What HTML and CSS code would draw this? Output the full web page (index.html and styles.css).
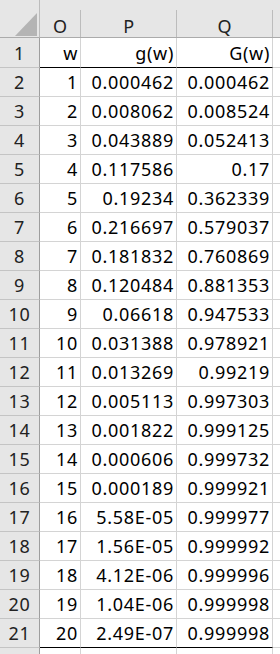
FILE: index.html
```html
<!DOCTYPE html>
<html>
<head>
<meta charset="utf-8">
<link rel="stylesheet" href="styles.css">
</head>
<body>
<div class="sheet">
  <div class="c corner"><svg class="tri" width="22" height="23" viewBox="0 0 22 23"><polygon points="0,23 22,0 22,23" fill="#b4b4b4"/></svg></div>
  <div class="c h">O</div>
  <div class="c h">P</div>
  <div class="c h">Q</div>
  <div class="c h x"></div>

  <div class="c r">1</div><div class="c tb">w</div><div class="c tb">g(w)</div><div class="c tb">G(w)</div><div class="c x"></div>
  <div class="c r">2</div><div class="c">1</div><div class="c">0.000462</div><div class="c">0.000462</div><div class="c x"></div>
  <div class="c r">3</div><div class="c">2</div><div class="c">0.008062</div><div class="c">0.008524</div><div class="c x"></div>
  <div class="c r">4</div><div class="c">3</div><div class="c">0.043889</div><div class="c">0.052413</div><div class="c x"></div>
  <div class="c r">5</div><div class="c">4</div><div class="c">0.117586</div><div class="c">0.17</div><div class="c x"></div>
  <div class="c r">6</div><div class="c">5</div><div class="c">0.19234</div><div class="c">0.362339</div><div class="c x"></div>
  <div class="c r">7</div><div class="c">6</div><div class="c">0.216697</div><div class="c">0.579037</div><div class="c x"></div>
  <div class="c r">8</div><div class="c">7</div><div class="c">0.181832</div><div class="c">0.760869</div><div class="c x"></div>
  <div class="c r">9</div><div class="c">8</div><div class="c">0.120484</div><div class="c">0.881353</div><div class="c x"></div>
  <div class="c r">10</div><div class="c">9</div><div class="c">0.06618</div><div class="c">0.947533</div><div class="c x"></div>
  <div class="c r">11</div><div class="c">10</div><div class="c">0.031388</div><div class="c">0.978921</div><div class="c x"></div>
  <div class="c r">12</div><div class="c">11</div><div class="c">0.013269</div><div class="c">0.99219</div><div class="c x"></div>
  <div class="c r">13</div><div class="c">12</div><div class="c">0.005113</div><div class="c">0.997303</div><div class="c x"></div>
  <div class="c r">14</div><div class="c">13</div><div class="c">0.001822</div><div class="c">0.999125</div><div class="c x"></div>
  <div class="c r">15</div><div class="c">14</div><div class="c">0.000606</div><div class="c">0.999732</div><div class="c x"></div>
  <div class="c r">16</div><div class="c">15</div><div class="c">0.000189</div><div class="c">0.999921</div><div class="c x"></div>
  <div class="c r">17</div><div class="c">16</div><div class="c">5.58E-05</div><div class="c">0.999977</div><div class="c x"></div>
  <div class="c r">18</div><div class="c">17</div><div class="c">1.56E-05</div><div class="c">0.999992</div><div class="c x"></div>
  <div class="c r">19</div><div class="c">18</div><div class="c">4.12E-06</div><div class="c">0.999996</div><div class="c x"></div>
  <div class="c r">20</div><div class="c">19</div><div class="c">1.04E-06</div><div class="c">0.999998</div><div class="c x"></div>
  <div class="c r">21</div><div class="c tb">20</div><div class="c tb">2.49E-07</div><div class="c tb">0.999998</div><div class="c x"></div>
  <div class="c r"></div><div class="c"></div><div class="c"></div><div class="c"></div><div class="c x"></div>
</div>
</body>
</html>
```

FILE: styles.css
```css
html, body {
  margin: 0;
  padding: 0;
  background: #ffffff;
}

.sheet {
  display: grid;
  grid-template-columns: 40px 41px 96px 96px 7px;
  grid-template-rows: 38px 30px repeat(20, 29px) 29px;
  font-family: "Noto Sans", "Open Sans", sans-serif;
  font-size: 18px;
  color: #000;
}

.c {
  box-sizing: border-box;
  display: flex;
  align-items: flex-end;
  justify-content: flex-end;
  padding: 0 2px 4px 0;
  line-height: 20px;
  letter-spacing: 0.7px;
  white-space: nowrap;
  border-right: 1px solid #d4d4d4;
  border-bottom: 1px solid #d4d4d4;
}

.c.x {
  border-right: none;
}

.c.tb {
  border-bottom-color: #000000;
}

.c.h {
  justify-content: center;
  padding: 0 0 1px 0;
  background-color: #e6e6e6;
  background-image: linear-gradient(#bcbcbc, #bcbcbc);
  background-size: 1px 27px;
  background-position: right bottom;
  background-repeat: no-repeat;
  border-right: none;
  border-bottom: 1px solid #ababab;
  color: #222222;
}

.c.h.x {
  background-image: none;
}

.c.corner {
  padding: 0 2px 1px 0;
  background: #e6e6e6;
  border-right: 1px solid #bcbcbc;
  border-bottom: 1px solid #ababab;
}

.tri {
  display: block;
}

.c.r {
  justify-content: center;
  padding: 0 0 4px 0;
  background: #e6e6e6;
  border-right: 1px solid #9e9e9e;
  border-bottom: 1px solid #c4c4c4;
  color: #222222;
}
```
